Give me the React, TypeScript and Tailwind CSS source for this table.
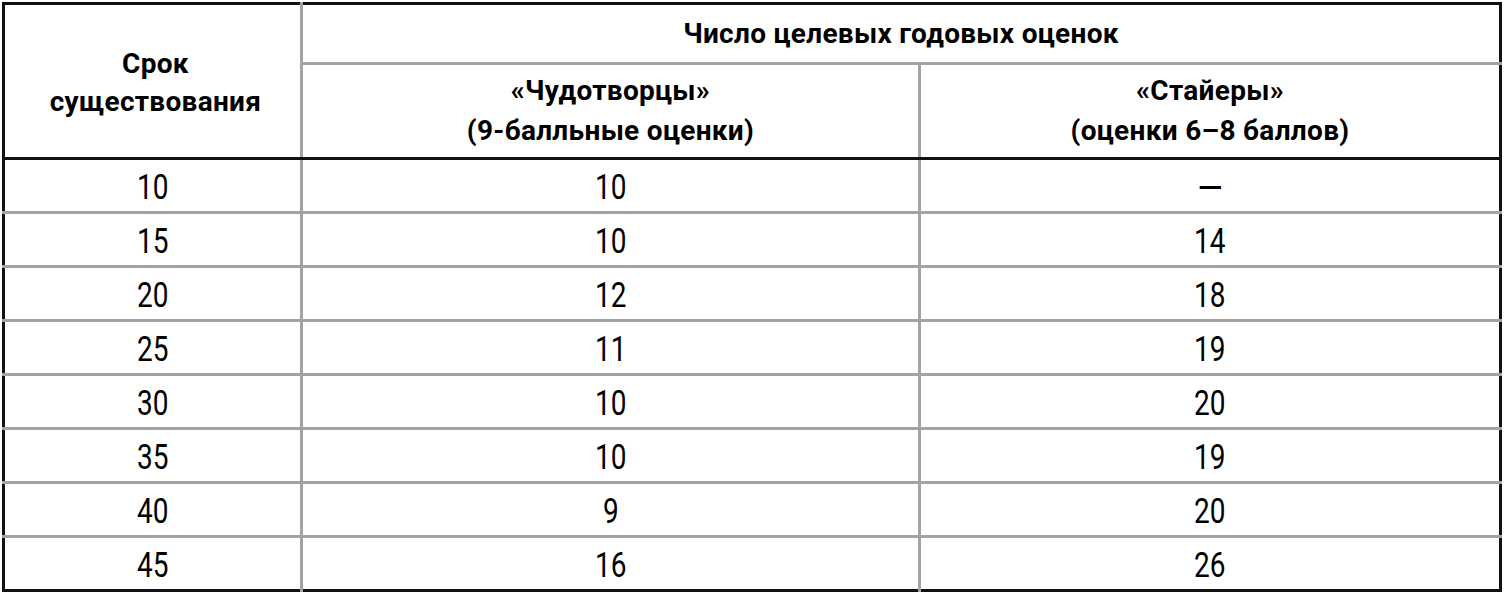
const rows: [string, string, string][] = [
  ['10', '10', '—'],
  ['15', '10', '14'],
  ['20', '12', '18'],
  ['25', '11', '19'],
  ['30', '10', '20'],
  ['35', '10', '19'],
  ['40', '9', '20'],
  ['45', '16', '26'],
];

export default function App() {
  return (
    <div className="w-[1505px] h-[593px] bg-white pl-[2px] pt-[2px]">
      <table
        className="w-[1500px] border-collapse border-[3px] border-[#111] text-black text-center"
        style={{ fontFamily: 'Roboto, "Liberation Sans", sans-serif' }}
      >
        <colgroup>
          <col className="w-[298px]" />
          <col className="w-[618px]" />
          <col />
        </colgroup>
        <thead className="font-black text-[28px] leading-[38px] tracking-[0.3px]">
          <tr className="h-[60px]">
            <th rowSpan={2} className="border-r-[3px] border-[#a3a3a3] border-b-[3px] border-b-[#111] pt-[4px] pl-[6px]">
              Срок
              <br />
              существования
            </th>
            <th colSpan={2} className="border-b-[3px] border-[#a3a3a3]">
              Число целевых годовых оценок
            </th>
          </tr>
          <tr className="h-[95px]">
            <th className="border-r-[3px] border-[#a3a3a3] border-b-[3px] border-b-[#111] leading-[40px]">
              «Чудотворцы»
              <br />
              (9-балльные оценки)
            </th>
            <th className="border-b-[3px] border-b-[#111] leading-[40px]">
              «Стайеры»
              <br />
              (оценки 6–8 баллов)
            </th>
          </tr>
        </thead>
        <tbody className="text-[35px]">
          {rows.map((r, i) => (
            <tr key={i} className="h-[54px]">
              {r.map((v, j) => (
                <td
                  key={j}
                  className={`border-[#a3a3a3] pt-[3px] leading-none ${j < 2 ? 'border-r-[3px]' : ''} ${i < rows.length - 1 ? 'border-b-[3px]' : ''}`}
                >
                  {v === '—' ? (
                    <span className="inline-block font-medium text-[32px]">{v}</span>
                  ) : (
                    <span className="inline-block scale-x-[0.8]">{v}</span>
                  )}
                </td>
              ))}
            </tr>
          ))}
        </tbody>
      </table>
    </div>
  );
}
